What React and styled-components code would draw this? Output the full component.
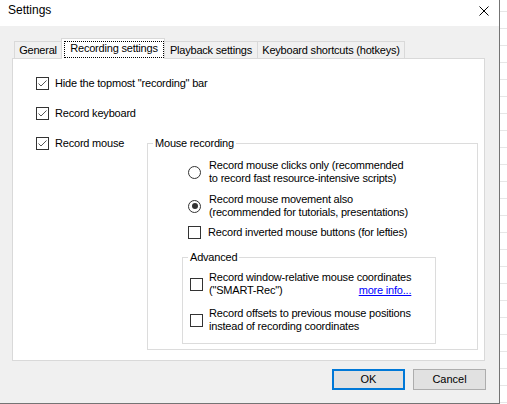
import React from "react"
import styled, { createGlobalStyle } from "styled-components"

const GlobalStyle = createGlobalStyle`
  html, body {
    margin: 0;
    padding: 0;
    background: #fff;
  }
  body {
    font-family: "Liberation Sans", Arial, sans-serif;
    font-size: 11px;
    line-height: 13px;
    letter-spacing: -0.2px;
    color: #000;
  }
`

const Screen = styled.div`
  display: flex;
  width: 507px;
  height: 404px;
  overflow: hidden;
`

const Dialog = styled.div`
  display: flex;
  flex-direction: column;
  box-sizing: border-box;
  width: 500px;
  height: 404px;
  border-right: 1px solid #747474;
  border-bottom: 1px solid #747474;
  background: #f0f0f0;
`

// window sitting behind the dialog, a list with thin row rules
const Backdrop = styled.div`
  flex: 1;
  background: repeating-linear-gradient(
    to bottom,
    #fff 0 11px,
    #e6e6e6 11px 12px,
    #fff 12px 17px
  );
`

const TitleBar = styled.div`
  display: flex;
  align-items: center;
  justify-content: space-between;
  box-sizing: border-box;
  height: 26px;
  padding: 0 10px 5px 8px;
  background: #fff;
`

const Title = styled.span`
  font-size: 12px;
  letter-spacing: 0;
`

const CloseIcon = styled.svg`
  display: block;
  width: 10px;
  height: 10px;
`

const Body = styled.div`
  flex: 1;
  display: flex;
  flex-direction: column;
  padding: 12px 14px 0 12px;
`

const TabStrip = styled.div`
  position: relative;
  z-index: 1;
  display: flex;
  align-items: flex-end;
  height: 20px;
  padding-left: 2px;
`

const Tab = styled.div`
  box-sizing: border-box;
  display: flex;
  justify-content: center;
  width: ${(p) => p.$width}px;
  height: ${(p) => (p.$active ? 21 : 17)}px;
  margin-left: -1px;
  margin-bottom: ${(p) => (p.$active ? -1 : 0)}px;
  padding: ${(p) => (p.$active ? "2px 0 1px 2px" : "2px 0 0")};
  border: 1px solid #d9d9d9;
  border-bottom: none;
  background: ${(p) => (p.$active ? "#fff" : "#f0f0f0")};
  white-space: nowrap;

  &:first-child {
    margin-left: 0;
  }
`

const FocusRing = styled.span`
  flex: 1;
  text-align: center;
  border: 1px dotted #000;
`

const TabPanel = styled.div`
  box-sizing: border-box;
  display: flex;
  flex-direction: column;
  gap: 17px;
  height: 303px;
  padding: 18px 0 0 23px;
  border: 1px solid #d9d9d9;
  background: #fff;
`

const Option = styled.label`
  display: flex;
  align-items: center;
  gap: ${(p) => p.$gap ?? 6}px;
  margin-top: ${(p) => p.$top ?? 0}px;
  white-space: nowrap;
`

const Box = styled.span`
  box-sizing: border-box;
  flex: none;
  display: flex;
  align-items: center;
  justify-content: center;
  width: 13px;
  height: 13px;
  border: 1px solid #333;
  background: #fff;
`

const Round = styled.span`
  box-sizing: border-box;
  flex: none;
  display: flex;
  align-items: center;
  justify-content: center;
  width: 13px;
  height: 13px;
  border: 1px solid #333;
  border-radius: 50%;
  background: #fff;

  &::after {
    content: "";
    display: ${(p) => (p.$on ? "block" : "none")};
    width: 6px;
    height: 6px;
    border-radius: 50%;
    background: #333;
  }
`

const MouseRow = styled.div`
  display: grid;
  grid-template-columns: 111px 331px;
  align-items: start;
`

const Group = styled.fieldset`
  box-sizing: border-box;
  width: ${(p) => p.$width}px;
  min-width: 0;
  margin: ${(p) => p.$margin ?? "0"};
  padding: ${(p) => p.$padding};
  border: 1px solid #dcdcdc;

  legend {
    padding: 0 2px;
    line-height: 13px;
  }
`

const OptionList = styled.div`
  display: flex;
  flex-direction: column;
  padding-left: ${(p) => p.$indent}px;
`

const TwoLines = styled.span`
  display: inline-flex;
  flex-direction: column;
`

const LinkLine = styled.span`
  display: flex;
  justify-content: space-between;
`

const Link = styled.a`
  color: #0000ff;
  text-decoration: underline;
  cursor: pointer;
`

const ButtonRow = styled.div`
  display: flex;
  justify-content: flex-end;
  gap: 8px;
  margin: 8px -1px 0 0;
`

const Button = styled.button`
  box-sizing: border-box;
  width: 73px;
  height: 21px;
  padding: 0;
  font: inherit;
  color: #000;
  background: #e1e1e1;
  border: ${(p) => (p.$default ? "2px solid #0078d7" : "1px solid #adadad")};
`

const Checkbox = ({ checked, gap, top, children }) => (
  <Option $gap={gap} $top={top}>
    <Box>
      {checked && (
        <svg width="11" height="11" viewBox="0 0 11 11">
          <polyline points="1.5,5.5 4,8 9.5,2.5" fill="none" stroke="#555" strokeWidth="1" />
        </svg>
      )}
    </Box>
    {children}
  </Option>
)

const Radio = ({ on, top, children }) => (
  <Option $gap={8} $top={top}>
    <Round $on={on} />
    {children}
  </Option>
)

const tabs = [
  { label: "General", width: 48 },
  { label: "Recording settings", width: 104, active: true },
  { label: "Playback settings", width: 94 },
  { label: "Keyboard shortcuts (hotkeys)", width: 148 },
]

export default function App() {
  return (
    <Screen>
      <GlobalStyle />
      <Dialog>
        <TitleBar>
          <Title>Settings</Title>
          <CloseIcon viewBox="0 0 10 10">
            <path d="M0.5 0.5 L9.5 9.5 M9.5 0.5 L0.5 9.5" stroke="#000" strokeWidth="1" />
          </CloseIcon>
        </TitleBar>
        <Body>
          <TabStrip>
            {tabs.map((t) => (
              <Tab key={t.label} $width={t.width} $active={t.active}>
                {t.active ? <FocusRing>{t.label}</FocusRing> : t.label}
              </Tab>
            ))}
          </TabStrip>
          <TabPanel>
            <Checkbox checked>Hide the topmost "recording" bar</Checkbox>
            <Checkbox checked>Record keyboard</Checkbox>
            <MouseRow>
              <Checkbox checked>Record mouse</Checkbox>
              <Group $width={331} $padding="0 0 5px 5px">
                <legend>Mouse recording</legend>
                <OptionList $indent={35}>
                  <Radio top={9}>
                    <span>
                      Record mouse clicks only (recommended
                      <br />
                      to record fast resource-intensive scripts)
                    </span>
                  </Radio>
                  <Radio on top={8}>
                    <span>
                      Record mouse movement also
                      <br />
                      (recommended for tutorials, presentations)
                    </span>
                  </Radio>
                  <Checkbox gap={7} top={7}>
                    Record inverted mouse buttons (for lefties)
                  </Checkbox>
                </OptionList>
                <Group $width={254} $margin="12px 0 0 29px" $padding="0 0 10px 5px">
                  <legend>Advanced</legend>
                  <OptionList $indent={2}>
                    <Checkbox top={7}>
                      <TwoLines>
                        <span>Record window-relative mouse coordinates</span>
                        <LinkLine>
                          <span>("SMART-Rec")</span>
                          <Link>more info...</Link>
                        </LinkLine>
                      </TwoLines>
                    </Checkbox>
                    <Checkbox top={10}>
                      <span>
                        Record offsets to previous mouse positions
                        <br />
                        instead of recording coordinates
                      </span>
                    </Checkbox>
                  </OptionList>
                </Group>
              </Group>
            </MouseRow>
          </TabPanel>
          <ButtonRow>
            <Button $default>OK</Button>
            <Button>Cancel</Button>
          </ButtonRow>
        </Body>
      </Dialog>
      <Backdrop />
    </Screen>
  )
}
